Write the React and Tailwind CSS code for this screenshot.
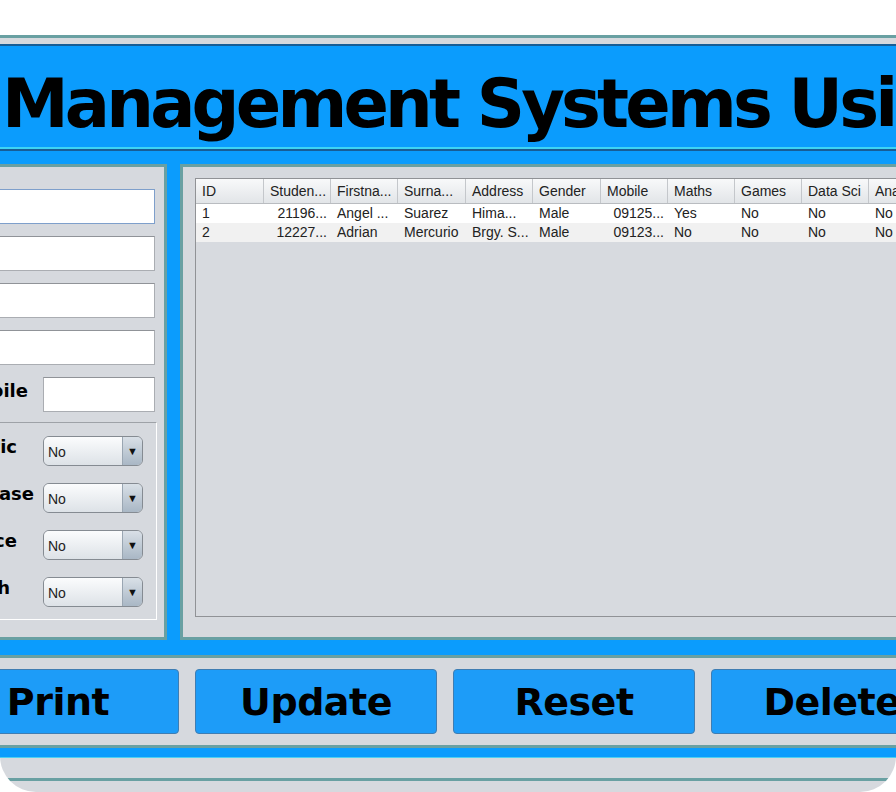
import React from "react";

const cols = [
  { h: "ID", w: 68 },
  { h: "Studen...", w: 67, right: true },
  { h: "Firstna...", w: 67 },
  { h: "Surna...", w: 68 },
  { h: "Address", w: 67 },
  { h: "Gender", w: 68 },
  { h: "Mobile", w: 67, right: true },
  { h: "Maths", w: 67 },
  { h: "Games", w: 67 },
  { h: "Data Sci", w: 67 },
  { h: "Analytics", w: 67 },
  { h: "English", w: 67 },
];

const rows = [
  ["1", "21196...", "Angel ...", "Suarez", "Hima...", "Male", "09125...", "Yes", "No", "No", "No", "No"],
  ["2", "12227...", "Adrian", "Mercurio", "Brgy. S...", "Male", "09123...", "No", "No", "No", "No", "No"],
];

const bold = { fontFamily: '"DejaVu Sans", Verdana, sans-serif' };

function Combo() {
  return (
    <div className="w-[100px] h-[30px] rounded-[6px] border border-[#858b92] flex overflow-hidden shrink-0">
      <div className="flex-1 bg-linear-to-b from-[#fbfcfd] to-[#dde2e7] flex items-center pl-[4px] pt-[2px] text-[14px] text-[#222]">
        No
      </div>
      <div className="w-[20px] bg-linear-to-b from-[#d9e0e7] to-[#a9b7c5] border-l border-[#9aa6b2] flex items-center justify-center text-[11px] leading-none text-[#111]">
        ▼
      </div>
    </div>
  );
}

function ComboRow({ label, mr }) {
  return (
    <div className="flex items-center justify-end">
      <span className={`text-[18px] leading-none font-bold text-black whitespace-nowrap mb-[8px] ${mr}`} style={bold}>
        {label}
      </span>
      <Combo />
    </div>
  );
}

function InputRow({ label, focused }) {
  return (
    <div className="flex items-center justify-between">
      <span className="text-[18px] leading-none font-bold text-black whitespace-nowrap mb-[8px]" style={bold}>
        {label}
      </span>
      <div
        className={`w-[200px] h-[35px] bg-white border ${
          focused ? "border-[#7e9fcb]" : "border-[#aaadb2] border-t-[#909398]"
        }`}
      />
    </div>
  );
}

function Button({ children }) {
  return (
    <div
      className="w-[242px] h-[65px] shrink-0 rounded-[4px] bg-[#1d9cf8] border border-[#3f7db2] flex items-center justify-center text-[38px] font-bold text-black leading-none tracking-[-0.5px]"
      style={bold}
    >
      {children}
    </div>
  );
}

export default function App() {
  return (
    <div
      className="w-[896px] h-[792px] bg-white overflow-hidden"
      style={{ fontFamily: '"Liberation Sans", Arial, sans-serif' }}
    >
      <div className="h-[35px] bg-white" />
      <div className="h-[757px] rounded-b-[36px] overflow-hidden bg-[#d6d9de] border-t-[3px] border-[#69a0a2] flex flex-col">
        <div className="h-[6px] shrink-0" />
        <div className="bg-[#0b9cfd] border-t-2 border-[#175d96] border-b border-b-[#4fd0f0] flex flex-col shrink-0">
          {/* title */}
          <div className="h-[103px] border-b-2 border-[#3ed4f4] overflow-hidden">
            <div
              className="flex whitespace-nowrap pt-[25px] text-[67px] font-bold leading-none tracking-[-3.8px] text-black"
              style={bold}
            >
              <span className="w-[300px] -ml-[298px] shrink-0 text-right pr-[21px]">Student</span>
              <span>Management Systems Using Java</span>
            </div>
          </div>
          <div className="h-[2px] bg-[#175d96]" />
          <div className="h-[13px]" />

          {/* panels */}
          <div className="h-[476px] flex gap-[13px] -ml-[253px]">
            <div className="w-[420px] shrink-0 border-[3px] border-[#69a0a2] bg-[#d6d9de] pt-[22px] pr-[9px] pl-[20px] flex flex-col">
              <div className="flex flex-col gap-[12px]">
                <InputRow label="Student ID" focused />
                <InputRow label="Firstname" />
                <InputRow label="Surname" />
                <InputRow label="Address" />
                <div className="flex items-center justify-end">
                  <span className="text-[18px] leading-none font-bold text-black whitespace-nowrap mb-[8px] mr-[15px]" style={bold}>
                    Mobile
                  </span>
                  <div className="w-[112px] h-[35px] bg-white border border-[#aaadb2] border-t-[#909398]" />
                </div>
              </div>
              <div className="mt-[10px] -mr-[2px] h-[198px] border border-[#9ea2a7] border-r-white border-b-white pt-[13px] pr-[13px] flex flex-col gap-[17px]">
                <ComboRow label="Arithmetic" mr="mr-[26px]" />
                <ComboRow label="Database" mr="mr-[9px]" />
                <ComboRow label="Science" mr="mr-[26px]" />
                <ComboRow label="Math" mr="mr-[33px]" />
              </div>
            </div>

            <div className="w-[800px] shrink-0 border-[3px] border-[#69a0a2] bg-[#d6d9de] pl-[12px] pt-[11px] pb-[20px] flex">
              <div className="flex-1 border border-[#909296] bg-[#d7dadf] overflow-hidden">
                <div className="flex h-[25px] border-b border-[#b9bcc0] bg-linear-to-b from-[#f8f9fa] to-[#e2e5e8]">
                  {cols.map((c, i) => (
                    <div
                      key={i}
                      style={{ width: c.w }}
                      className="shrink-0 border-r border-[#c4c7cb] flex items-center pl-[6px] text-[14px] text-[#222] whitespace-nowrap overflow-hidden"
                    >
                      {c.h}
                    </div>
                  ))}
                </div>
                {rows.map((r, ri) => (
                  <div key={ri} className={`flex h-[19px] ${ri % 2 === 0 ? "bg-white" : "bg-[#f1f1f1]"}`}>
                    {r.map((v, ci) => (
                      <div
                        key={ci}
                        style={{ width: cols[ci].w }}
                        className={`shrink-0 flex items-center text-[14px] text-[#222] whitespace-nowrap overflow-hidden ${
                          cols[ci].right ? "justify-end pr-[4px]" : "pl-[6px]"
                        }`}
                      >
                        {v}
                      </div>
                    ))}
                  </div>
                ))}
              </div>
            </div>
          </div>

          <div className="h-[15px]" />
          {/* buttons */}
          <div className="h-[93px] border-y-[3px] border-[#69a0a2] bg-[#d6d9de] flex items-center gap-[16px] -ml-[63px]">
            <Button>Print</Button>
            <Button>Update</Button>
            <Button>Reset</Button>
            <Button>Delete</Button>
          </div>
          <div className="h-[9px]" />
        </div>
        <div className="h-[20px] shrink-0" />
        <div className="h-[3px] bg-[#69a0a2] shrink-0" />
      </div>
    </div>
  );
}
